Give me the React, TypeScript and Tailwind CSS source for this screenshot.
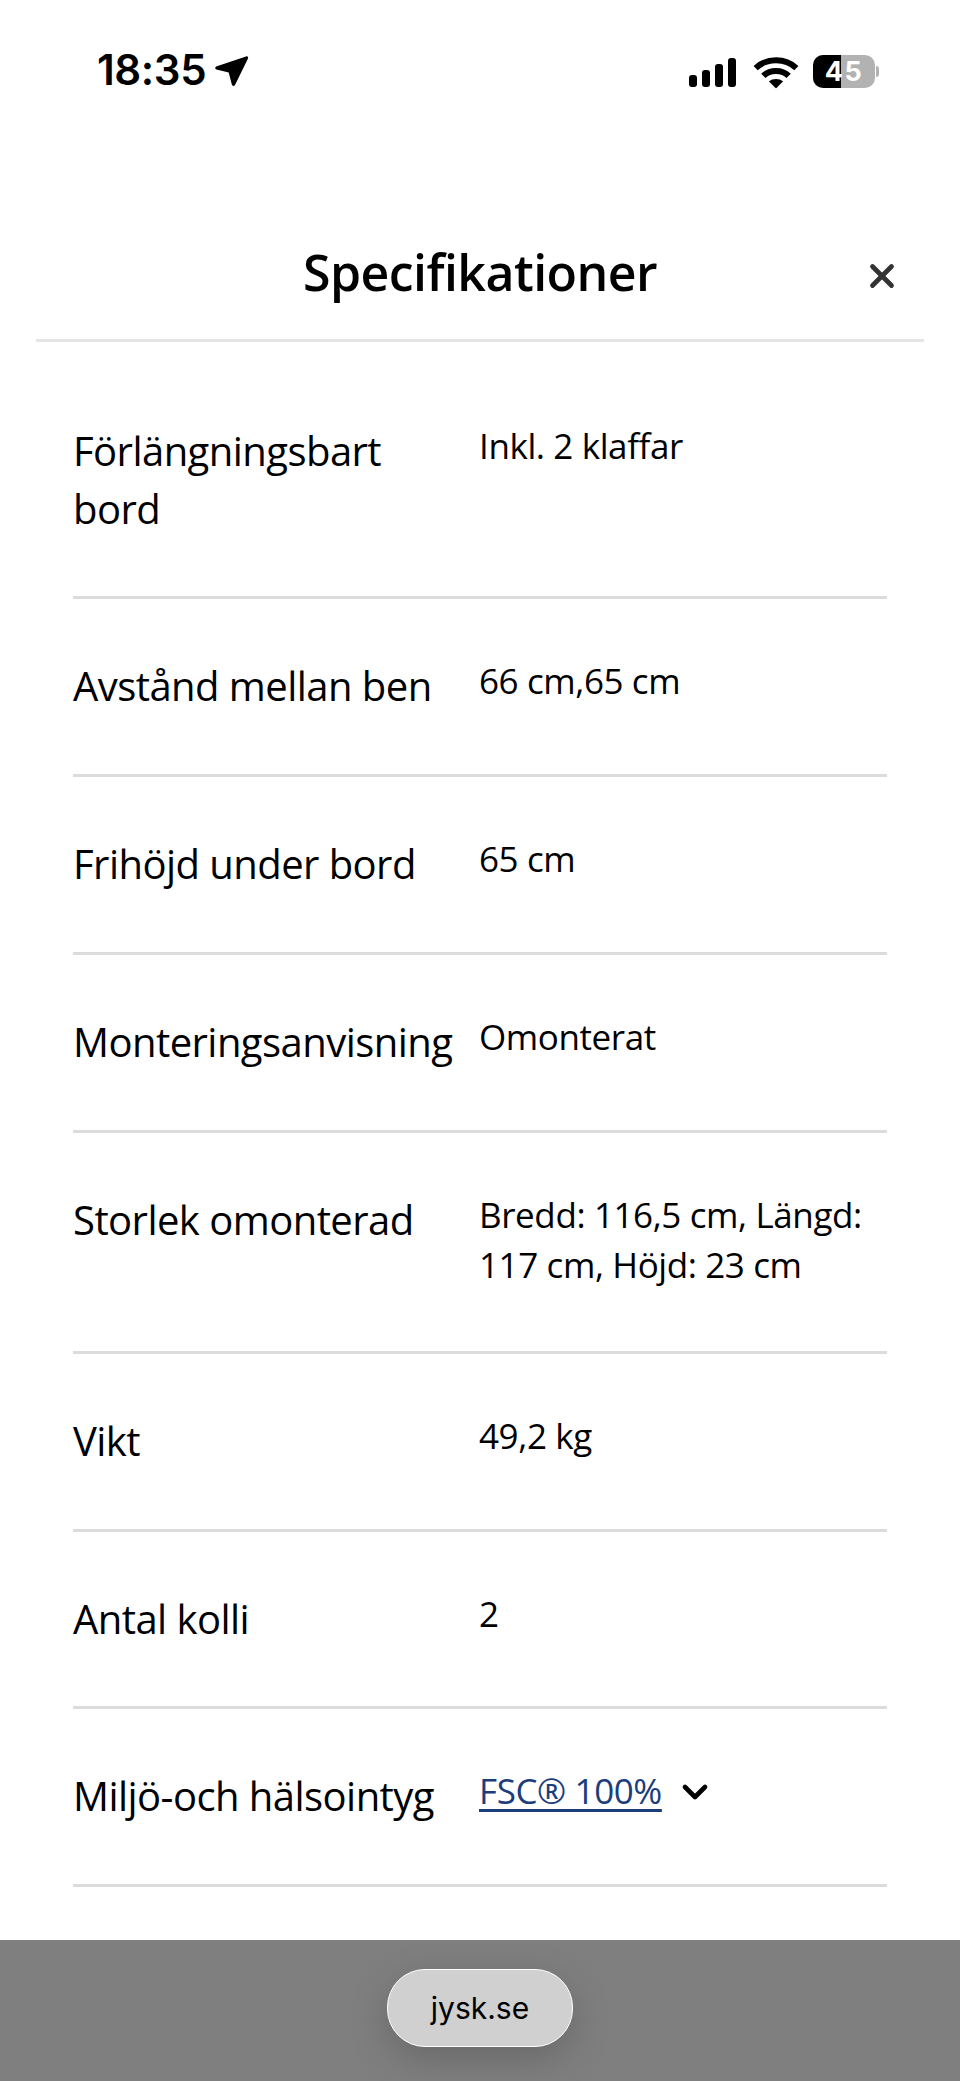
import { ChevronDown, X } from "lucide-react";

const specs = [
  { label: "Förlängningsbart bord", value: "Inkl. 2 klaffar", height: "h-[257px] pt-[80px]" },
  { label: "Avstånd mellan ben", value: "66 cm,65 cm", height: "h-[178px] pt-[58px]" },
  { label: "Frihöjd under bord", value: "65 cm", height: "h-[178px] pt-[58px]" },
  { label: "Monteringsanvisning", value: "Omonterat", height: "h-[178px] pt-[58px]" },
  { label: "Storlek omonterad", value: "Bredd: 116,5 cm, Längd: 117 cm, Höjd: 23 cm", height: "h-[221px] pt-[58px]" },
  { label: "Vikt", value: "49,2 kg", height: "h-[178px] pt-[58px]" },
  { label: "Antal kolli", value: "2", height: "h-[177px] pt-[58px]" },
];

function StatusBar() {
  return (
    <div className="flex h-[104px] items-end justify-between pl-[97px] pr-[81px] pb-[11px]">
      <div className="flex items-center gap-[9px]">
        <span className="font-['Inter',sans-serif] text-[42px] leading-[46px] font-semibold tracking-[-0.4px] text-black">18:35</span>
        <svg width="34" height="34" viewBox="0 0 34 34" fill="#000" className="mt-[2px]">
          <path d="M31 2.5c1.3-.6 2.6.7 2 2L20 31c-.7 1.4-2.7 1.3-3.1-.2l-3.2-12.3-12.2-3C0 15.100-.2 13.200 1.200 12.500z" />
        </svg>
      </div>
      <div className="flex items-center gap-[16px] pb-[5px]">
        <svg width="48" height="30" viewBox="0 0 48 30" fill="#000" className="mr-[2px]">
          <rect x="0" y="18" width="8" height="12" rx="3" />
          <rect x="13" y="13" width="8" height="17" rx="3" />
          <rect x="26" y="7" width="8" height="23" rx="3" />
          <rect x="39" y="1" width="8" height="29" rx="3" />
        </svg>
        <svg width="42" height="30" viewBox="0 0 42 30" fill="none" stroke="#000" strokeWidth="5.500" className="scale-110">
          <path d="M2.500 11.500C12.500 2 29.500 2 39.500 11.500" />
          <path d="M9.500 18.500C15.500 12.500 26.500 12.500 32.500 18.500" />
          <path d="M21 30l-6.500-6.500c3.500-3 9.500-3 13 0z" fill="#000" stroke="none" />
        </svg>
        <div className="flex items-center gap-[1px]">
          <div className="relative flex h-[33px] w-[62px] items-center justify-center overflow-hidden rounded-[10px] bg-[#b2b2b2]">
            <div className="absolute inset-y-0 left-0 w-[28px] bg-black" />
            <span className="relative font-['Inter',sans-serif] text-[27px] leading-none font-bold tracking-[1.5px] text-white">45</span>
          </div>
          <div className="h-[11px] w-[3px] rounded-r-full bg-[#b2b2b2]" />
        </div>
      </div>
    </div>
  );
}

function SpecRow({ label, value, height }: { label: string; value: string; height: string }) {
  return (
    <div className={`flex border-b-[3px] border-[#dcdcdc] ${height}`}>
      <div className="w-[406px] pr-[20px] text-[40px] leading-[58px] tracking-[-0.55px] text-black">{label}</div>
      <div className="-mt-[1px] flex-1 text-[35px] leading-[50px] tracking-[-0.4px] text-black">{value}</div>
    </div>
  );
}

export default function App() {
  return (
    <div className="flex h-[2081px] w-[960px] flex-col overflow-hidden bg-white font-['Open_Sans',sans-serif]">
      <StatusBar />
      <header className="relative mx-[36px] mt-[96px] flex h-[142px] items-start justify-center border-b-[3px] border-[#e3e5e7] pt-[40px]">
        <h1 className="text-[50px] leading-[64px] font-semibold tracking-[-0.55px] text-black">Specifikationer</h1>
        <X className="absolute top-[57px] right-[23px] text-[#333]" size={38} strokeWidth={3} />
      </header>
      <main className="flex-1 px-[73px]">
        {specs.map((s) => (
          <SpecRow key={s.label} {...s} />
        ))}
        <div className="flex h-[178px] border-b-[3px] border-[#dcdcdc] pt-[58px]">
          <div className="w-[406px] pr-[20px] text-[40px] leading-[58px] tracking-[-0.55px] text-black">Miljö-och hälsointyg</div>
          <div className="-mt-[1px] flex flex-1 items-start gap-[13px] text-[35px] leading-[50px] tracking-[-0.4px]">
            <span className="text-[#1c3d7c] underline underline-offset-[5px]">FSC® 100%</span>
            <ChevronDown className="mt-[6px] text-black" size={40} strokeWidth={2.800} />
          </div>
        </div>
      </main>
      <div className="flex h-[141px] items-start justify-center bg-[#7f7f7f] pt-[29px]">
        <div className="flex h-[78px] w-[186px] items-center justify-center rounded-[38px] border-[1.5px] border-white bg-[#d0d0d0] font-['Inter',sans-serif] text-[30px] font-normal text-black shadow-[0_12px_40px_rgba(0,0,0,0.18)]">
          jysk.se
        </div>
      </div>
    </div>
  );
}
